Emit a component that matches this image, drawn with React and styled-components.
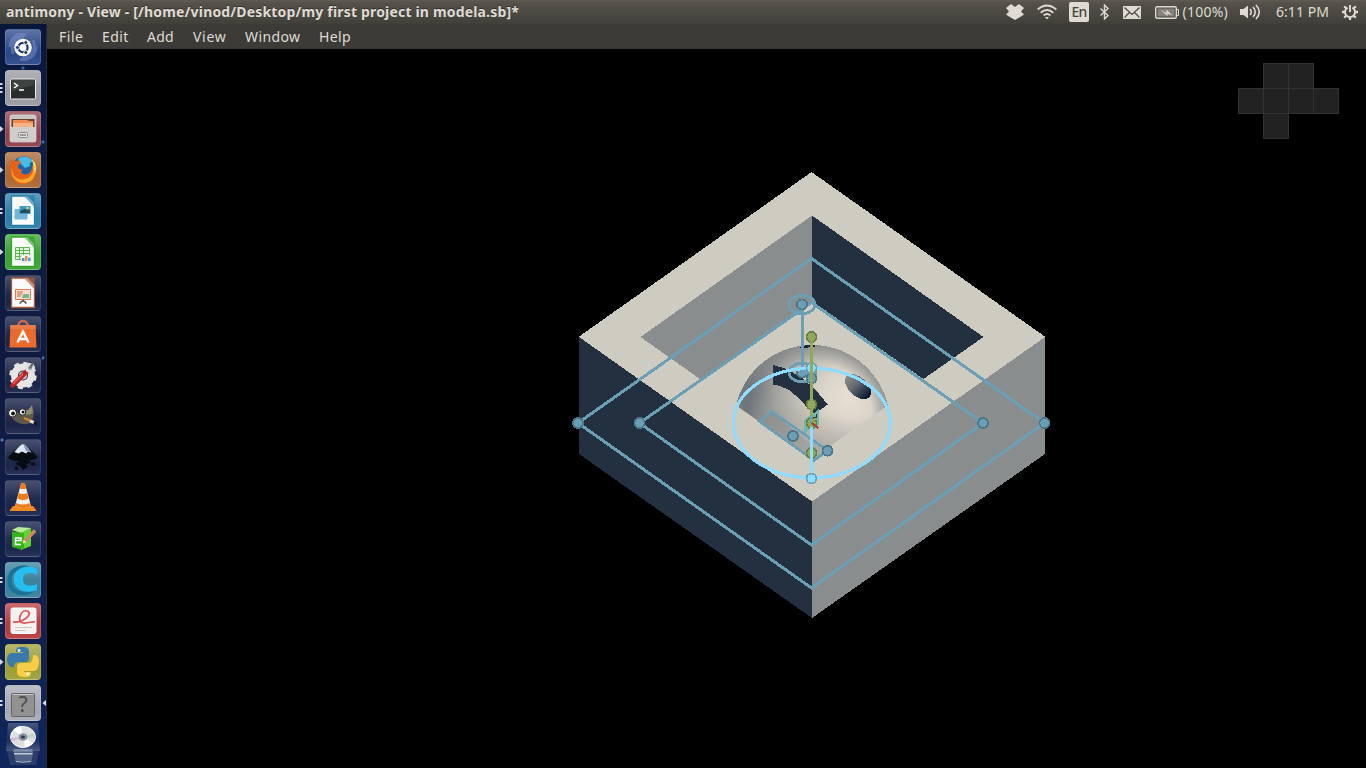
import React from "react";
import styled, { createGlobalStyle } from "styled-components";

const GlobalStyle = createGlobalStyle`
  * { box-sizing: border-box; }
  html, body { margin: 0; padding: 0; background: #000; overflow: hidden; }
  svg { display: block; flex: none; }
`;

const Desktop = styled.div`
  width: 1366px;
  height: 768px;
  display: flex;
  flex-direction: column;
  background: #000;
  color: #dfdbd2;
  font-family: "Noto Sans", "Open Sans", sans-serif;
  overflow: hidden;
`;

const Panel = styled.header`
  height: 24px;
  flex: none;
  display: flex;
  align-items: center;
  justify-content: space-between;
  padding: 0 8px 0 6px;
  background: linear-gradient(#5f5c51 0, #545249 3px, #403f3a 100%);
`;

const Title = styled.div`
  font-size: 14px;
  font-weight: 700;
  line-height: 24px;
  letter-spacing: ${(p) => p.$track}px;
  white-space: pre;
  text-shadow: 0 -1px 0 #33322e;
`;

const Tray = styled.div`
  display: flex;
  align-items: center;
  height: 24px;
`;

const Slot = styled.div`
  width: ${(p) => p.$w}px;
  margin-left: ${(p) => p.$gap || 0}px;
  flex: none;
`;

const TrayText = styled(Slot)`
  font-size: 14px;
  line-height: 24px;
  letter-spacing: ${(p) => p.$track || 0}px;
  white-space: nowrap;
`;

const Language = styled(Slot)`
  height: 20px;
  border-radius: 2px;
  background: #dfdbd2;
  color: #45443e;
  font: 500 14px/20px "Noto Sans", sans-serif;
  letter-spacing: -0.8px;
  text-align: center;
`;

const Body = styled.div`
  flex: 1;
  display: flex;
  min-height: 0;
`;

const Launcher = styled.nav`
  width: 47px;
  flex: none;
  display: flex;
  flex-direction: column;
  gap: 5px;
  padding-top: 5px;
  overflow: hidden;
  border-right: 1px solid #252a3a;
  background:
    radial-gradient(circle at 43px 118px, #3d70ad 0 1px, transparent 2px),
    radial-gradient(circle at 43px 334px, #3d70ad 0 1px, transparent 2px),
    radial-gradient(circle at 2px 416px, #4c7cb8 0 1px, transparent 2px),
    radial-gradient(circle at 23px 44px, #3b65a0 0 1px, transparent 2px),
    linear-gradient(#08163a, #0e1f45 18%, #101a40 45%, #111e48 70%, #10265a);
`;

const LauncherRow = styled.div`
  height: 36px;
  flex: none;
  display: flex;
  align-items: center;
`;

const Tile = styled.div`
  width: 36px;
  height: 36px;
  border-radius: 4px;
  border: 1px solid rgba(255, 255, 255, ${(p) => (p.$bg ? 0.14 : 0.09)});
  background:
    linear-gradient(rgba(255, 255, 255, ${(p) => (p.$bg ? 0.26 : 0.22)}), rgba(255, 255, 255, 0.05) 50%, rgba(255, 255, 255, 0.02) 75%, rgba(255, 255, 255, 0.08)),
    ${(p) => p.$bg || "rgba(35,42,75,.3)"};
  display: flex;
  align-items: center;
  justify-content: center;
`;

const Folded = styled.div`
  height: 47px;
  margin-top: -4px;
  padding-left: 5px;
  flex: none;
`;

const Window = styled.main`
  flex: 1;
  display: flex;
  flex-direction: column;
  min-width: 0;
`;

const MenuBar = styled.div`
  height: 25px;
  flex: none;
  display: flex;
  padding-left: 12px;
  background: #3c3b37;
  border-bottom: 1px solid #373632;
`;

const MenuItem = styled.div`
  width: ${(p) => p.$w}px;
  font-size: 14px;
  line-height: 25px;
  letter-spacing: ${(p) => p.$track}px;
  white-space: nowrap;
`;

const MENUS = [
  ["File", 43, 0.5],
  ["Edit", 45, 0.4],
  ["Add", 46, 0.2],
  ["View", 52, 0.7],
  ["Window", 74, 0.4],
  ["Help", 40, 0.4],
];

function Pips({ n, y = 18 }) {
  return (
    <svg width="5" height="36" fill="#d5d8e2">
      {n === 1 && <path d={`M0 ${y - 3}L3.500 ${y}L0 ${y + 3}z`} />}
      {n === 2 && <path d={`M0 ${y - 3}h2l1 1-1 1H0zM0 ${y + 1}h2l1 1-1 1H0z`} />}
      {n === 3 && <path d={`M0 ${y - 5}h2l1 1-1 1H0zM0 ${y - 1}h2l1 1-1 1H0zM0 ${y + 3}h2l1 1-1 1H0z`} />}
    </svg>
  );
}

function Doc({ edge, children }) {
  return (
    <>
      <path d="M6.500 3h16L29.500 10V32.500H6.500z" fill="#fbfbfa" stroke={edge} strokeWidth="1.300" />
      <path d="M18.500 2.500h11V14z" fill={edge} opacity=".85" />
      <path d="M19 3l10 10v-3.500L22.500 3z" fill="#fff" opacity=".25" />
      {children}
    </>
  );
}

const ICONS = {
  dash: (
    <>
      <path d="M5 18C5 8 13 4 21 6M31 17c0 11-8 15-16 13M8 25C5 12 12 8 19 8M28 11c4 11-3 17-10 17" fill="none" stroke="#8ea5dc" strokeWidth="3" opacity=".4" />
      <circle cx="18" cy="18.500" r="8.800" fill="#fff" />
      <circle cx="18" cy="18.500" r="4.600" fill="none" stroke="#1d3573" strokeWidth="2.200" />
      <g fill="#1d3573" stroke="#fff" strokeWidth=".9"><circle cx="12.400" cy="18.500" r="2" /><circle cx="20.800" cy="13.500" r="2" /><circle cx="20.800" cy="23.500" r="2" /></g>
    </>
  ),
  terminal: (
    <>
      <rect x="5.500" y="9" width="25" height="20" rx="1" fill="#292d2c" stroke="#eee" />
      <path d="M7 10h22v5L7 21z" fill="#fff" opacity=".1" />
      <path d="M9 13l3.500 2.500L9 18M14 20h5" fill="none" stroke="#fff" strokeWidth="1.500" />
    </>
  ),
  files: (
    <>
      <rect x="5" y="4" width="26" height="27" rx="2" fill="#c9c7c3" stroke="#ddd" strokeWidth=".7" />
      <path d="M6.500 8h23v9h-23z" fill="#68402d" /><path d="M8 9h14l2 1h4v8H8z" fill="#ef8a50" /><path d="M8 12h20v5H8z" fill="#f7b383" />
      <path d="M5 16h26v13a2 2 0 0 1-2 2H7a2 2 0 0 1-2-2z" fill="#cfcecb" />
      <rect x="13.500" y="21.500" width="9" height="5" rx="1" fill="#e2e2e0" stroke="#888" /><path d="M15 24h6" stroke="#555" />
    </>
  ),
  firefox: (
    <>
      <circle cx="19" cy="17" r="12.500" fill="#1763ae" /><path d="M13 7c5-4 13-2 16 3-3-1-5 1-4 4l-5 2-4-4z" fill="#47bce5" />
      <path d="M6 7c1 2 3 2 5 2 2-1 4 0 5 1l-3 4c0 3 3 4 5 3l-2 3c3 5 11 2 11-5 2-3 1-7 0-9 8 8 6 25-9 26C8 33 2 22 6 7z" fill="#e76218" />
      <path d="M7 16c0 9 6 13 13 11 6-1 9-7 8-13 5 8 0 17-9 17C10 31 5 23 7 16z" fill="#f9a82c" />
      <path d="M27 7c5 5 5 10 3 15-1-6-2-10-3-15z" fill="#fbdd4a" />
    </>
  ),
  writer: <Doc edge="#2b7daa"><path d="M10 16.500h12v9.500H10zM9.500 24h12" fill="#76b7d9" stroke="#76b7d9" /><path d="M14.500 13h11v8h-11z" fill="#3a9bd0" /><path d="M15 18l4-2 6 1v3H15z" fill="#254f5b" /><circle cx="22.500" cy="15" r="1.200" fill="#eeda4a" /></Doc>,
  calc: <Doc edge="#36a52c"><path d="M10.500 13.500h14v12h-14zM10.500 16.500h14M10.500 19.500h14M10.500 22.500h14M14.500 13v12M18.500 13v12" fill="#e1f3dc" stroke="#5cb64f" /><path d="M16 21h10v7H16z" fill="#fff" stroke="#b8c8c0" strokeWidth=".5" /><path d="M17 24h2.500v3H17z" fill="#3d9bc5" /><path d="M20 22h2.500v5H20z" fill="#e6914a" /><path d="M23 23.500h2.500V27H23z" fill="#59a1d0" /></Doc>,
  impress: <Doc edge="#a65b39"><path d="M10.500 14.500h15v10h-15z" fill="#f8ded0" stroke="#d57b58" /><path d="M12 17h6M12 19h5M12 21h4" stroke="#cc6543" fill="none" /><path d="M18 19h6v4h-7z" fill="#78b98b" /><path d="M14.500 28.500l3.500-3 3.500 3" stroke="#444" strokeWidth="1.400" fill="none" /></Doc>,
  software: (
    <>
      <path d="M13 11c0-8 10-8 10 0" fill="none" stroke="#cc6b4b" strokeWidth="2.400" />
      <path d="M5.500 9h25l1 22.500h-27z" fill="#ee6a2b" /><path d="M5.500 9h25l.2 4H5.300z" fill="#e97b4d" />
      <path d="M12.500 26.500L18 15.500l5.500 11M14.500 23h7" fill="none" stroke="#fff" strokeWidth="2.400" />
    </>
  ),
  settings: (
    <>
      <circle cx="18" cy="18.500" r="8.500" fill="none" stroke="#e5e5e3" strokeWidth="7" />
      <circle cx="18" cy="18.500" r="12" fill="none" stroke="#e5e5e3" strokeWidth="3.500" strokeDasharray="5 4.425" />
      <circle cx="18" cy="18.500" r="4" fill="#c4c6cb" />
      <path d="M7.500 28.500L22 14" stroke="#b82426" strokeWidth="4.600" strokeLinecap="round" /><path d="M8 27L18 17" stroke="#ee605b" strokeWidth="1.500" />
      <circle cx="25" cy="11" r="3.500" fill="#9aa0ae" stroke="#dddfe0" strokeWidth="3" /><path d="M25 11l3-5" stroke="#686b76" strokeWidth="2.500" />
    </>
  ),
  gimp: (
    <>
      <path d="M5 14c3 2 7 1 11-1 5 1 8-1 11-6 2 6 3 14-2 18-6 3-14 0-18-5z" fill="#5d594c" /><path d="M16 13c5 1 8-1 11-6l1 8c-5 3-9 2-12-2z" fill="#908b77" />
      <circle cx="7.500" cy="15" r="4" fill="#fff" stroke="#222" /><circle cx="17.500" cy="14" r="3.200" fill="#fff" stroke="#222" /><circle cx="8" cy="15.500" r="1.900" fill="#111" /><circle cx="18" cy="14" r="1.500" fill="#111" />
      <path d="M19 20l8 3.500" stroke="#d68a2c" strokeWidth="2" /><path d="M25 23l4 1.500" stroke="#ddd" strokeWidth="3" /><path d="M29 24l3 3" stroke="#111" strokeWidth="2" />
    </>
  ),
  inkscape: (
    <>
      <path d="M18 5c2 0 12 10 14 12 2 3-3 4-8 4l2 3-5 1 2 3-5 3-3-4-5-2 4-3c-6 0-13-2-10-5C6 15 16 5 18 5z" fill="#070b12" />
      <path d="M18 5c2 0 6 5 8.500 8.500l-3.500-1-2 2-4-2-3.500 2-4-1.500C11 11 16 5 18 5z" fill="#dce9f3" /><path d="M18 5c2 0 6 5 8.500 8.500L21 12z" fill="#809bb7" />
      <path d="M26 25h4M10 29l3 1" stroke="#080b13" strokeWidth="3" />
    </>
  ),
  vlc: (
    <>
      <path d="M8 26h20l3 4v1H5v-1z" fill="#f08b22" /><path d="M16 4q2-2 4 0l6 22q-8 4-16 0z" fill="#f4f0e8" /><path d="M16 4q2-2 4 0l1.200 4.500q-3.200 1-6.400 0zM14 13q4 2 8 0l1.500 5.500q-5.500 3-11 0zM11 23l-1 3q8 4 16 0l-1-3q-7 3-14 0z" fill="#ef7c16" />
    </>
  ),
  editor: (
    <>
      <path d="M7 10l9 2v17L7 26z" fill="#268c19" /><path d="M16 12l10-5v18l-10 4z" fill="#62d232" /><path d="M7 9l6-3 13 1-10 5z" fill="#b7ed95" />
      <path d="M7 11l12 1v16L7 26z" fill="#36b31d" />
      <path d="M10.500 19.500h5.500v-2.500h-5.500v6.500h5.500" fill="none" stroke="#fff" strokeWidth="1.600" /><path d="M20 20L30 9.500" stroke="#c98e5c" strokeWidth="3.600" /><path d="M17.500 22.500l1-4 3 3z" fill="#f0dbb8" />
    </>
  ),
  cura: (
    <>
      <path d="M27 8.500C17 1 4 8 4.500 19c.5 12 13 15 22 10" fill="none" stroke="#1a7296" strokeWidth="4" />
      <path d="M32 13V7C24 2 11 5 9 15c-2 12 10 18 23 13v-6c-8 3-14 2-14-5 0-6 7-8 14-4z" fill="#24bff0" />
    </>
  ),
  pdf: (
    <>
      <rect x="6" y="5" width="25" height="25.500" rx="2" fill="#f3f2ef" stroke="#fff" />
      <path d="M8 19c11 1 21-9 14-11-6-2-11 11-4 12 5 .5 10-2 12-1" fill="none" stroke="#dc5259" strokeWidth="1.700" />
      <path d="M10 24.500h17M10 27.500h11" stroke="#cac9c5" />
    </>
  ),
  python: (
    <>
      <path d="M17 3c5 0 7 1 7 5v6q0 4-4 4h-7q-4 0-4 5H7c-6 0-7-14 0-14h11V8h-7c0-4 1-5 6-5z" fill="#3b78ac" />
      <path d="M20 33c-5 0-8-1-8-5v-5q0-4 4-4h7q5 0 5-8h2c6 0 5 16-1 16H19v1h7c0 4-1 5-6 5z" fill="#f8cd44" />
      <circle cx="14" cy="6.500" r="1.400" fill="#e7edf0" /><circle cx="22.500" cy="30" r="1.400" fill="#fff" />
    </>
  ),
  unknown: (
    <>
      <rect x="6.500" y="8.500" width="23" height="23" rx="1" fill="#929292" stroke="#656565" /><path d="M7.500 9.500h21" stroke="#c5c5c5" />
      <text x="18" y="26.500" textAnchor="middle" fontSize="21" fontFamily="Noto Sans" fill="#4e4e4e">?</text>
    </>
  ),
};

const APPS = [
  ["dash", "#284487", 0],
  ["terminal", "#96989e", 3],
  ["files", "#903b48", 1],
  ["firefox", "#aa6531", 1],
  ["writer", "#267ca8", 2],
  ["calc", "#35a12e", 1],
  ["impress", "", 0],
  ["software", "", 0],
  ["settings", "", 0],
  ["gimp", "", 0],
  ["inkscape", "", 0],
  ["vlc", "", 0],
  ["editor", "", 0],
  ["cura", "#347e98", 2],
  ["pdf", "#b5373b", 2],
  ["python", "#9b9e31", 1],
  ["unknown", "#a5a8b2", 2],
];

function Disc() {
  return (
    <svg width="36" height="47" viewBox="0 0 36 47">
      <defs>
        <linearGradient id="discTile" x2="0" y2="1"><stop offset="0" stopColor="#a9b6cf" stopOpacity=".35" /><stop offset=".6" stopColor="#7f8db0" stopOpacity=".1" /><stop offset="1" stopColor="#8c9cba" stopOpacity=".45" /></linearGradient>
      </defs>
      <path d="M3 1h30l2 28H1z" fill="url(#discTile)" />
      <ellipse cx="18" cy="15" rx="12.500" ry="10.500" fill="#dedfe1" stroke="#f5f5f5" />
      <path d="M18 15L8 8q4-4 8-4zM18 15l10 6q-4 4-8 4z" fill="#fff" /><path d="M18 15l11-4 1 5z" fill="#b9dacb" /><path d="M18 15L6 16v4z" fill="#d5bada" />
      <ellipse cx="18" cy="15" rx="4.500" ry="3.800" fill="#8b91a1" /><ellipse cx="18" cy="15" rx="2" ry="1.600" fill="#25395a" />
      <path d="M2 29h32l-3 14H5z" fill="#7584a5" opacity=".25" />
      <path d="M9 27h18l1 3H8z" fill="#aab3c4" opacity=".55" />
      <path d="M9 30h19l-1.500 10h-16z" fill="#6b7c99" opacity=".6" />
      <path d="M9 31h18.500v1.500H9z" fill="#c3c8d1" />
      <path d="M11 39.500q7 1.500 15 0" fill="none" stroke="#aeb5c2" />
    </svg>
  );
}

const BLUE = "#6a9fb5";
const LIGHT = "#8edcff";
const GREEN = "#90a959";

function Handle({ x, y, tone = "blue" }) {
  const [fill, edge] = { blue: [BLUE, "#4d7789"], light: [LIGHT, BLUE], green: [GREEN, "#6b7d3d"] }[tone];
  return <circle cx={x} cy={y} r="5" fill={fill} stroke={edge} strokeWidth="1.800" />;
}

function Scene() {
  return (
    <svg width="1319" height="719" viewBox="47 49 1319 719" shapeRendering="crispEdges">
      <defs>
        <radialGradient id="ball" gradientUnits="userSpaceOnUse" cx="848" cy="398" r="118">
          <stop offset="0" stopColor="#e5dfd2" /><stop offset=".2" stopColor="#ddd7cb" /><stop offset=".4" stopColor="#c6c2b9" />
          <stop offset=".62" stopColor="#a1a19e" /><stop offset=".8" stopColor="#6f757b" /><stop offset=".94" stopColor="#253241" />
        </radialGradient>
        <radialGradient id="rim" gradientUnits="userSpaceOnUse" cx="812" cy="423" r="78">
          <stop offset=".78" stopColor="#8a8d8d" stopOpacity="0" /><stop offset="1" stopColor="#858888" stopOpacity=".8" />
        </radialGradient>
        <linearGradient id="underside" gradientUnits="userSpaceOnUse" x1="822" y1="408" x2="808" y2="460">
          <stop offset="0" stopColor="#a3a39f" stopOpacity="0" /><stop offset="1" stopColor="#a3a39f" stopOpacity=".75" />
        </linearGradient>
        <linearGradient id="bore"><stop offset="0" stopColor="#8a8d8d" /><stop offset=".4" stopColor="#656b70" /><stop offset="1" stopColor="#03122a" /></linearGradient>
        <linearGradient id="groove" gradientUnits="userSpaceOnUse" x1="760" y1="418" x2="820" y2="455"><stop offset="0" stopColor="#8b8e8d" /><stop offset="1" stopColor="#aaa9a4" /></linearGradient>
        <clipPath id="opening"><path d="M640 337L811.500 215L984 337L812 459z" /></clipPath>
      </defs>
      <g fill="#222" stroke="#323232">
        {[[1263, 63], [1288, 63], [1238, 88], [1263, 88], [1288, 88], [1313, 88], [1263, 113]].map(([x, y]) => (
          <rect key={`${x}-${y}`} x={x + 0.5} y={y + 0.5} width="25" height="25" />
        ))}
      </g>
      <path d="M811.500 172L1045.500 337L811.500 502L578.500 337z" fill="#cecbc0" />
      <path d="M579 337L812 501.500V618L579 454z" fill="#23303f" />
      <path d="M1045 337L812 501.500V618L1045 454z" fill="#8a8d8d" />
      <path d="M812 215.500L640.500 337L700 379L812 301z" fill="#8a8d8d" />
      <path d="M812 215.500L983.500 337L923.500 379L812 301z" fill="#23303f" />
      <g clipPath="url(#opening)">
        <circle cx="812" cy="423" r="78" fill="url(#ball)" /><circle cx="812" cy="423" r="78" fill="url(#rim)" /><circle cx="812" cy="423" r="78" fill="url(#underside)" />
      </g>
      <path d="M800 347l7-2h8v2l-15 1z" fill="#17243a" />
      <path d="M773 365L787 369L802 378L815 389L827.700 404.500L814.500 414L811 412L800 399L789 390L780 386L773 384.500z" fill="#23303f" />
      <ellipse cx="858" cy="386.700" rx="15.500" ry="9.300" transform="rotate(43 858 386.700)" fill="url(#bore)" />
      <path d="M802 378h5v2h-3z" fill="#d3d1c9" />
      <path d="M771.700 411L759.500 421.500L814 459L822 454z" fill="url(#groove)" />
      <path d="M814 413l5-4v16l-5 4-4 3v-10z" fill="#75b5aa" />
      <path d="M804 420l5-4v14l-5 4z" fill="#75b5aa" />
      <g fill="none" stroke={BLUE} strokeWidth="3">
        <path d="M811.500 258.500L1044.500 423L811.500 588L578 423z" />
        <path d="M811.500 302.500L983 423L811.500 545L639.500 423z" />
        <path d="M771.700 411.500L827.500 450.500L814 460.500L759.500 421.500z" strokeWidth="2.700" />
        <path d="M802.500 304V372" />
        <ellipse cx="802" cy="304.500" rx="13" ry="9.200" strokeWidth="2.800" /><ellipse cx="802" cy="372.500" rx="13" ry="9.200" strokeWidth="2.800" />
      </g>
      <Handle x={802} y={304.500} /><Handle x={802} y={372.500} />
      <path d="M806 366h11v13h-11z" fill={BLUE} />
      <Handle x={811.500} y={378.500} />
      <ellipse cx="811.700" cy="423" rx="78.300" ry="54.700" fill="none" stroke={LIGHT} strokeWidth="3.200" />
      <Handle x={811.500} y={368} tone="light" />
      <Handle x={811.500} y={453} tone="green" />
      <Handle x={811.500} y={337} tone="green" /><Handle x={811.500} y={404.500} tone="green" /><Handle x={811.500} y={423} tone="green" />
      <path d="M811.500 337V418" stroke={GREEN} strokeWidth="3" />
      <path d="M811.500 427V474" stroke={LIGHT} strokeWidth="3" />
      <path d="M811 415v9" stroke={BLUE} strokeWidth="1.500" /><path d="M811 423l5-5" stroke={GREEN} strokeWidth="1.500" />
      <path d="M811.500 423L818.500 428" stroke="#ac4142" strokeWidth="2" />
      <path d="M813 417h3v-3" stroke="#23303f" fill="none" />
      <Handle x={811.500} y={478.500} tone="light" />
      <Handle x={793} y={436} /><Handle x={827.500} y={450.700} />
      <Handle x={578} y={423} /><Handle x={639.500} y={423} /><Handle x={983} y={423} /><Handle x={1044.500} y={423} />
    </svg>
  );
}

function Indicators() {
  const ink = "#dfdbd2";
  return (
    <Tray>
      <Slot $w={18}><svg width="18" height="16" fill={ink}><path d="M5 0l4 3 4-3 5 4-3 3.500 3 3-3 2-6 3.500-6-3.500-3-2 3-3L0 4z" /></svg></Slot>
      <Slot $w={20} $gap={13}><svg width="20" height="16" fill="none" stroke={ink} strokeWidth="1.800"><path d="M.7 5.500Q10-2.500 19.300 5.500M3.700 8.700Q10 3.200 16.300 8.700M6.600 11.500q3.400-2.900 6.800 0" /><path d="M8 13h4l-2 2.500z" fill={ink} stroke="none" /></svg></Slot>
      <Language $w={20} $gap={12}>En</Language>
      <Slot $w={9} $gap={11}><svg width="9" height="16" fill="none" stroke={ink} strokeWidth="1.400"><path d="M.5 4.500L8 11.500 4.500 15V1L8 4.500.5 11.500" /></svg></Slot>
      <Slot $w={18} $gap={14}><svg width="18" height="13"><path d="M0 0h18v13H0z" fill={ink} /><path d="M1.500 1.500L9 8.500l7.500-7M1.500 11.500l5-5M16.500 11.500l-5-5" stroke="#4b4942" strokeWidth="1.200" fill="none" /></svg></Slot>
      <Slot $w={24} $gap={14}><svg width="24" height="13"><rect x=".7" y=".7" width="20.600" height="11.600" rx="1.500" fill="none" stroke={ink} strokeWidth="1.400" /><path d="M2.500 2.500h17v8h-17z" fill="#858279" /><path d="M21.500 3.500h2v6h-2" fill="none" stroke={ink} /><path d="M5.500 4l6 3V3.500l6 6-5-2V10z" fill={ink} /></svg></Slot>
      <TrayText $w={46} $gap={3.500} $track={0.25}>(100%)</TrayText>
      <Slot $w={21} $gap={11.500}><svg width="21" height="16"><path d="M0 5h3.500L8 1.500v13L3.500 11H0z" fill={ink} /><path d="M10 5q2.500 3 0 6M13 3q4.500 5 0 10M16 1q6.500 7 0 14" fill="none" stroke={ink} strokeWidth="1.600" /></svg></Slot>
      <TrayText $w={54} $gap={15} $track={0.05}>6:11 PM</TrayText>
      <Slot $w={16} $gap={12}><svg width="16" height="16" fill="none" stroke={ink}><path d="M5.600 3.700a5 5 0 1 0 4.800 0" strokeWidth="1.900" /><path d="M8 1v7" strokeWidth="1.900" /><path d="M0 8h3M13 8h3M2.200 2.200l2 2M13.800 2.200l-2 2M2.200 13.800l2-2M13.800 13.800l-2-2M8 13v3" strokeWidth="2.300" /></svg></Slot>
    </Tray>
  );
}

export default function App() {
  return (
    <Desktop>
      <GlobalStyle />
      <Panel>
        <Title $track={0.175}>antimony - View - [/home/vinod/Desktop/my first project in modela.sb]*</Title>
        <Indicators />
      </Panel>
      <Body>
        <Launcher>
          {APPS.map(([name, bg, pips]) => (
            <LauncherRow key={name}>
              <Pips n={pips} />
              <Tile $bg={bg}><svg width="36" height="36">{ICONS[name]}</svg></Tile>
              {name === "unknown" && <svg width="5" height="8" fill="#e2e4ea"><path d="M5 1v6L1.500 4z" /></svg>}
            </LauncherRow>
          ))}
          <Folded><Disc /></Folded>
        </Launcher>
        <Window>
          <MenuBar>
            {MENUS.map(([label, w, track]) => <MenuItem key={label} $w={w} $track={track}>{label}</MenuItem>)}
          </MenuBar>
          <Scene />
        </Window>
      </Body>
    </Desktop>
  );
}
